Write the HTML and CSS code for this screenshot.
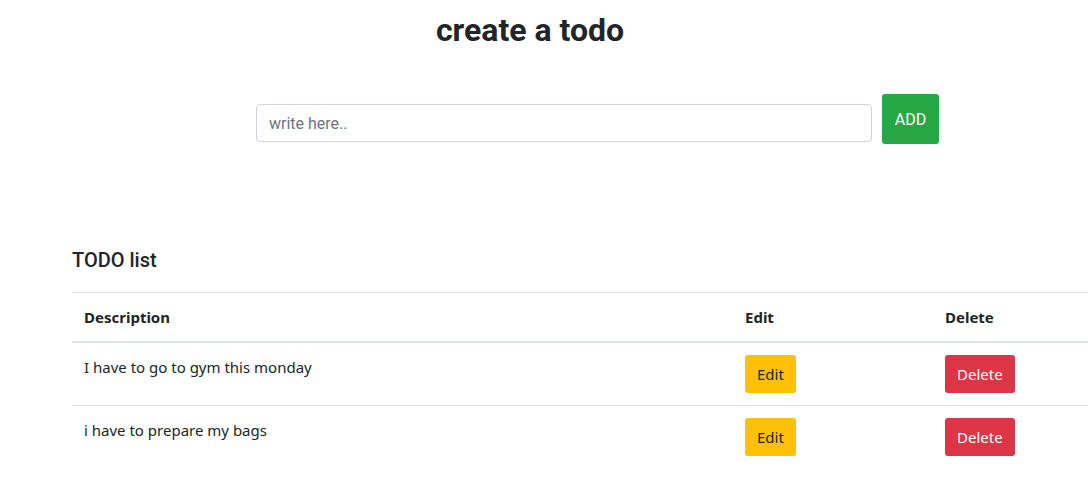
FILE: index.html
```html
<!DOCTYPE html>
<html>
<head>
<meta charset="utf-8">
<link rel="stylesheet" href="styles.css">
</head>
<body>
<main class="page">
  <header class="top">
    <h1 class="title">create a todo</h1>
  </header>
  <form class="add-form">
    <input class="add-input" type="text" placeholder="write here..">
    <button class="add-btn" type="button">ADD</button>
  </form>
  <section class="list">
    <h5 class="list-title">TODO list</h5>
    <table class="todo-table">
      <thead>
        <tr>
          <th class="col-desc">Description</th>
          <th class="col-edit">Edit</th>
          <th class="col-del">Delete</th>
        </tr>
      </thead>
      <tbody>
        <tr>
          <td>I have to go to gym this monday</td>
          <td><button class="btn btn-edit" type="button">Edit</button></td>
          <td><button class="btn btn-del" type="button">Delete</button></td>
        </tr>
        <tr>
          <td>i have to prepare my bags</td>
          <td><button class="btn btn-edit" type="button">Edit</button></td>
          <td><button class="btn btn-del" type="button">Delete</button></td>
        </tr>
      </tbody>
    </table>
  </section>
</main>
</body>
</html>
```
FILE: styles.css
```css
html, body {
  margin: 0;
  padding: 0;
  background: #fff;
  overflow: hidden;
}
body {
  font-family: Roboto, "Liberation Sans", sans-serif;
  color: #212529;
}
.page {
  padding-left: 72px;
}
.top {
  width: 916px;
  text-align: center;
}
.title {
  margin: 11px 0 0;
  font-size: 32px;
  font-weight: 700;
  line-height: 38px;
}
.add-form {
  display: flex;
  align-items: flex-start;
  gap: 10px;
  margin: 45px 0 0 184px;
}
.add-input {
  box-sizing: border-box;
  width: 616px;
  height: 38px;
  margin-top: 10px;
  padding: 6px 12px;
  border: 1px solid #ced4da;
  border-radius: 4px;
  font-family: Roboto, sans-serif;
  font-size: 16px;
  color: #495057;
  outline: none;
}
.add-input::placeholder {
  color: #6c757d;
}
.add-btn {
  box-sizing: border-box;
  width: 57px;
  height: 50px;
  padding: 0;
  border: none;
  border-radius: 3px;
  background: #28a745;
  color: #fff;
  font-family: Roboto, sans-serif;
  font-size: 16px;
  font-weight: 400;
}
.list {
  margin-top: 104px;
}
.list-title {
  margin: 0 0 20px;
  font-size: 20px;
  font-weight: 500;
  line-height: 24px;
}
.todo-table {
  width: 1016px;
  border-collapse: collapse;
  font-family: "Noto Sans", "Open Sans", sans-serif;
  font-size: 15px;
  color: #212529;
}
.todo-table th,
.todo-table td {
  padding: 12px;
  text-align: left;
  vertical-align: top;
  line-height: 24px;
  border-top: 1px solid #dee2e6;
}
.todo-table thead th {
  border-bottom: 2px solid #dee2e6;
  font-weight: 700;
}
.col-desc { width: 637px; }
.col-edit { width: 176px; }
.btn {
  box-sizing: border-box;
  height: 38px;
  padding: 0 12px;
  border: none;
  border-radius: 3px;
  font-family: "Noto Sans", "Open Sans", sans-serif;
  font-size: 15px;
  line-height: 38px;
  vertical-align: top;
}
.btn-edit {
  background: #ffc107;
  color: #212529;
}
.btn-del {
  background: #dc3545;
  color: #fff;
}
```
